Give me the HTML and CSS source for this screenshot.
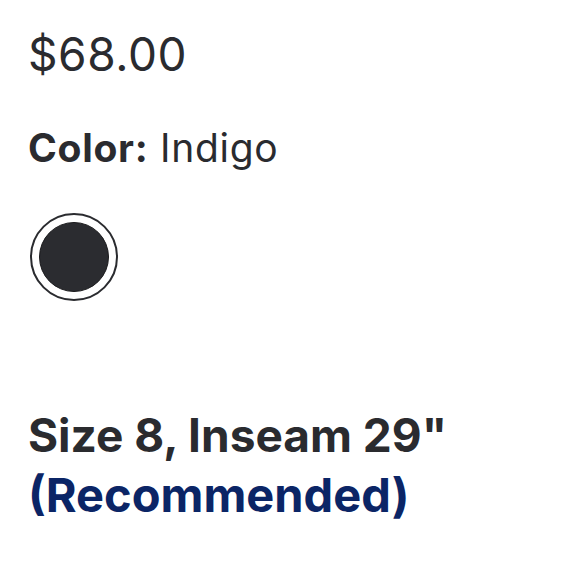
FILE: index.html
```html
<!DOCTYPE html>
<html>
<head>
<meta charset="utf-8">
<link rel="stylesheet" href="styles.css">
</head>
<body>
<div class="product">
  <div class="price">$68.00</div>
  <div class="color-label"><span class="label-bold">Color:</span> Indigo</div>
  <div class="swatches">
    <button class="swatch selected"><span class="swatch-fill"></span></button>
  </div>
  <div class="size">Size 8, Inseam 29"<br><span class="recommended">(Recommended)</span></div>
</div>
</body>
</html>
```
FILE: styles.css
```css
html, body {
  margin: 0;
  padding: 0;
  background: #fff;
}
body {
  font-family: Inter, "Noto Sans", sans-serif;
  color: #2a2b2f;
}
.product {
  padding: 22px 0 0 28px;
}
.price {
  font-size: 46px;
  line-height: 64px;
  font-weight: 400;
  letter-spacing: 0.6px;
}
.color-label {
  margin-top: 38px;
  font-size: 39px;
  line-height: 48px;
  font-weight: 400;
  letter-spacing: 0.7px;
}
.label-bold {
  font-weight: 700;
}
.swatches {
  display: flex;
  margin-top: 41px;
}
.swatch {
  width: 88px;
  height: 88px;
  margin: 0 0 0 2px;
  padding: 0;
  border: 2px solid #2a2b2f;
  border-radius: 50%;
  background: #fff;
  display: flex;
  align-items: center;
  justify-content: center;
}
.swatch-fill {
  width: 70px;
  height: 70px;
  border-radius: 50%;
  background: #2b2c30;
  box-sizing: border-box;
  border: 1px solid #1a1a1c;
}
.size {
  margin-top: 104px;
  font-size: 46px;
  line-height: 60px;
  font-weight: 700;
}
.recommended {
  color: #0b2566;
  font-size: 47px;
}
```
